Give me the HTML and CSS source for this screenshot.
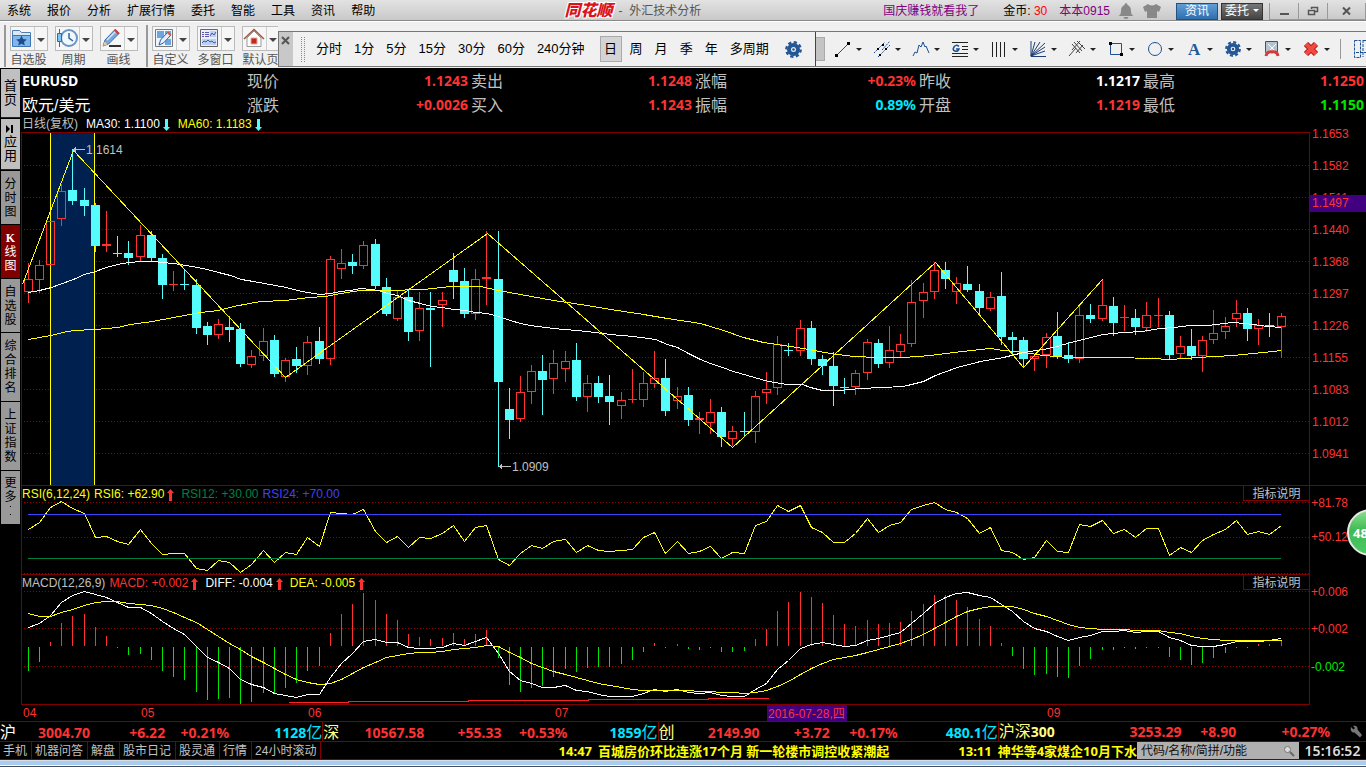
FILE: index.html
```html
<!DOCTYPE html>
<html lang="zh-CN">
<head>
    <meta charset="UTF-8">
    <title>同花顺 - 外汇技术分析</title>
    <link rel="stylesheet" href="styles.css">
</head>
<body>
<header class="titlebar">
    <nav class="menu">
        <button>系统</button><button>报价</button><button>分析</button><button>扩展行情</button><button>委托</button><button>智能</button><button>工具</button><button>资讯</button><button>帮助</button>
    </nav>
    <h1 class="title"><b class="logo">同花顺</b><span>- &nbsp;外汇技术分析</span></h1>
    <div class="user">
        <a class="promo" href="#">国庆赚钱就看我了</a>
        <span class="coin">金币: <em>30</em></span>
        <a href="#">本本0915</a>
        <svg width="16" height="18" viewBox="0 0 16 18"><path d="M8 1a2 2 0 0 1 1.500 2C12 4 13 6 13 9c0 3 1 4 2.500 5H.5C2 13 3 12 3 9c0-3 1-5 3.500-6A2 2 0 0 1 8 1zM5.500 15h5a2.500 2 0 0 1-5 0z" fill="#888"/></svg>
        <svg width="20" height="16" viewBox="0 0 20 16"><path d="M6 1q4 3 8 0l5 3-2 5-2-1v7H5V8L3 9 1 4z" fill="#888"/></svg>
    </div>
    <div class="title-btns">
        <button class="news">资讯</button>
        <button class="trade">委托<i class="caret"></i></button>
    </div>
    <div class="win-btns">
        <button aria-label="最小化"><svg width="10" height="10"><path d="M1 7h9v2H1z" fill="#555"/></svg></button>
        <button aria-label="还原"><svg width="12" height="10"><path d="M4.500 3V1.500h6v4H8M1.500 4.500h6v4h-6z" fill="none" stroke="#555" stroke-width="1.500"/></svg></button>
        <button aria-label="关闭" class="wide"><svg width="10" height="10"><path d="M1 1.500l7 7M8 1.500l-7 7" stroke="#555" stroke-width="2"/></svg></button>
    </div>
</header>

<div class="toolbar">
    <div class="tools">
        <div class="group">
            <button class="tool"><span class="box"><span class="pic">
                <svg width="22" height="20" viewBox="0 0 22 20"><path d="M1.500 17.500v-15h7l2 2h9v13z" fill="#dbe9f7" stroke="#4d7fb5"/><path d="M1.500 7.500h18v11h-18z" fill="#7fb6ec" stroke="#3c74b4"/><path d="M10.500 7.500l1.600 3.500 3.700.4-2.800 2.500.8 3.700-3.300-1.900-3.300 1.900.8-3.700-2.800-2.500 3.700-.4z" fill="#1d4e8f"/></svg>
            </span><span class="drop"><i class="caret"></i></span></span>自选股</button>
            <button class="tool"><span class="box"><span class="pic">
                <svg width="22" height="20" viewBox="0 0 22 20"><circle cx="13" cy="10" r="8" fill="#f2f7fc" stroke="#6a94c4" stroke-width="2"/><path d="M13 5v5l4 3" fill="none" stroke="#2f67a8" stroke-width="1.500"/><path d="M3.500 1v18" stroke="#2f67a8"/><path d="M1.500 5.500h4v8h-4z" fill="#7dc4f5" stroke="#2f67a8"/></svg>
            </span><span class="drop"><i class="caret"></i></span></span>周期</button>
            <button class="tool"><span class="box"><span class="pic">
                <svg width="22" height="20" viewBox="0 0 22 20"><path d="M8 18h12" stroke="#333" stroke-width="2"/><path d="M2 18l2-6L14 1.500l4 4L7.500 16z" fill="#79a9dc" stroke="#3b6aa0"/><path d="M6 12L15 3" stroke="#d7e9fb" stroke-width="1.500"/><path d="M13 2.500l1.500-1.500 4 4L17 6.500z" fill="#d23a2c"/><path d="M2 18l1.500-4.500 3 3z" fill="#e8c9a0"/></svg>
            </span><span class="drop"><i class="caret"></i></span></span>画线</button>
        </div>
        <div class="group">
            <button class="tool"><span class="box"><span class="pic">
                <svg width="20" height="20" viewBox="0 0 20 20"><path d="M1.500 1.500h17v17h-17z" fill="#eef4fb" stroke="#777"/><path d="M3 3h7v7H3zM11 11h6v6h-6zM11 3h6v5h-6z" fill="#6da5df"/><path d="M5 17l1.500-5 7-7.500 3 3-7 7.500z" fill="#e6eef8" stroke="#2c5f9e"/><path d="M13 5l1.500-1.500 3 3L16 8z" fill="#d45c46"/></svg>
            </span><span class="drop"><i class="caret"></i></span></span>自定义</button>
            <button class="tool"><span class="box"><span class="pic">
                <svg width="20" height="20" viewBox="0 0 20 20"><path d="M1.500 1.500h17v17h-17z" fill="#e8effa" stroke="#666"/><path d="M3 4.500h2M6 4.500h4M3 6.500h2M6 6.500h4M3 8.500h2M6 8.500h4" stroke="#5a57b0"/><path d="M11 3h6v6h-6zM3 11h14v6H3z" fill="#bfd0ef"/><path d="M11 8l2-3 2 2 2-3M3 15l2-2 2 1 2-2 2 2 2-1 2 2 2-1" fill="none" stroke="#4058a8"/></svg>
            </span><span class="drop"><i class="caret"></i></span></span>多窗口</button>
            <button class="tool"><span class="box"><span class="pic">
                <svg width="22" height="20" viewBox="0 0 22 20"><path d="M4 10v8.500h14V10l-7-7z" fill="#fff" stroke="#999"/><path d="M1 11L11 1.500 21 11" fill="none" stroke="#9a5a40" stroke-width="1.500"/><path d="M8 10h6v6H8z" fill="#c22a1c" stroke="#e4a79c"/></svg>
            </span><span class="drop"><i class="caret"></i></span></span>默认页</button>
        </div>
    </div>
    <div class="float-bar">
        <button class="close" aria-label="关闭工具条"><svg width="10" height="10"><path d="M1 1l7 7M8 1L1 8" stroke="#555" stroke-width="2"/></svg></button>
        <i class="grip"></i>
        <div class="periods">
            <button>分时</button><button>1分</button><button>5分</button><button>15分</button><button>30分</button><button>60分</button><button>240分钟</button><button class="day" aria-pressed="true">日</button><button>周</button><button>月</button><button>季</button><button>年</button><button class="multi">多周期</button>
            <button aria-label="周期设置"><svg class="gear" width="17" height="17" viewBox="0 0 17 17"><use href="#gear"/></svg></button>
        </div>
        <i class="hidden-btn"></i>
        <div class="draws" id="draws"></div>
        <i class="sep"></i>
        <button class="last" aria-label="区间"><svg width="14" height="20"><path d="M.5 1.500h6v17h-6zM9 1.500h5M9 1v17M2 13.500h12" fill="none" stroke="#1c4f93" stroke-dasharray="3 1"/></svg></button>
    </div>
</div>

<main class="main">
    <nav class="side">
        <button class="light">首页</button>
        <button class="light app"><svg width="9" height="8"><path d="M0 0l4 4-4 4zM5 0h2v8H5z" fill="#000"/></svg>应用</button>
        <button class="mid">分时图</button>
        <button class="mid on"><b>K</b>线图</button>
        <button class="mid">自选股</button>
        <button class="tall">综合排名</button>
        <button class="tall">上证指数</button>
        <button class="more">更多<i></i><i></i></button>
    </nav>
    <div class="content">
        <section class="quote">
            <strong>EURUSD</strong>
            <p>现价<b class="up">1.1243</b></p>
            <p>卖出<b class="up">1.1248</b></p>
            <p>涨幅<b class="up">+0.23%</b></p>
            <p>昨收<b class="flat">1.1217</b></p>
            <p>最高<b class="up">1.1250</b></p>
            <span class="cn">欧元/美元</span>
            <p>涨跌<b class="up">+0.0026</b></p>
            <p>买入<b class="up">1.1243</b></p>
            <p>振幅<b class="vol">0.89%</b></p>
            <p>开盘<b class="up">1.1219</b></p>
            <p>最低<b class="down">1.1150</b></p>
        </section>
        <div class="legend ma">
            <span class="gray">日线(复权)</span>
            <span class="white">MA30: 1.1100<svg class="arrow cyan"><use href="#down"/></svg></span>
            <span class="yellow">MA60: 1.1183<svg class="arrow cyan"><use href="#down"/></svg></span>
        </div>
        <div class="row">
            <div class="panel"><svg class="plot price" id="price"></svg></div>
            <svg class="scale price-scale" id="priceScale"></svg>
        </div>
        <div class="row line">
            <div class="panel">
                <div class="legend">
                    <span class="yellow">RSI(6,12,24)</span>
                    <span class="yellow">RSI6: +62.90<svg class="arrow red"><use href="#up"/></svg></span>
                    <span class="green">RSI12: +30.00</span>
                    <span class="blue">RSI24: +70.00</span>
                    <button class="explain">指标说明</button>
                </div>
                <svg class="plot rsi" id="rsi"></svg>
            </div>
            <svg class="scale rsi-scale" id="rsiScale"></svg>
        </div>
        <div class="row">
            <div class="panel last-panel">
                <div class="legend">
                    <span class="gray">MACD(12,26,9)</span>
                    <span class="red">MACD: +0.002<svg class="arrow red"><use href="#up"/></svg></span>
                    <span class="white">DIFF: -0.004<svg class="arrow red"><use href="#up"/></svg></span>
                    <span class="yellow">DEA: -0.005<svg class="arrow red"><use href="#up"/></svg></span>
                    <button class="explain">指标说明</button>
                </div>
                <svg class="plot macd" id="macd"></svg>
            </div>
            <svg class="scale macd-scale" id="macdScale"></svg>
        </div>
        <svg class="dates" id="dates"></svg>
    </div>
</main>

<footer>
    <div class="indexes">
        <div class="index sh"><p><span class="white">沪</span><b>3004.70</b></p><b>+6.22</b><b>+0.21%</b><b class="vol">1128<span>亿</span></b></div>
        <div class="index sz"><p><span>深</span><b>10567.58</b></p><b>+55.33</b><b>+0.53%</b><b class="vol">1859<span>亿</span></b></div>
        <div class="index cy"><p><span>创</span><b>2149.90</b></p><b>+3.72</b><b>+0.17%</b><b class="vol">480.1<span>亿</span></b></div>
        <div class="index hs"><p><span>沪深<strong>300</strong></span><b>3253.29</b></p><b>+8.90</b><b>+0.27%</b>
            <svg width="14" height="14" viewBox="0 0 14 14"><path d="M2 2l2.500 2.500L6 3 4 1c3-1 5 1 4.500 3.500L13 10l-2 2.500-5.500-5C3 8 1 5.500 2 2z" fill="#777"/></svg>
        </div>
    </div>
    <div class="status">
        <nav class="links">
            <button>手机</button><button>机器问答</button><button>解盘</button><button>股市日记</button><button>股灵通</button><button>行情</button><button>24小时滚动</button>
        </nav>
        <div class="news-roll">
            <a href="#"><time>14:47</time>百城房价环比连涨17个月 新一轮楼市调控收紧潮起</a>
            <a href="#"><time>13:11</time>神华等4家煤企10月下水</a>
        </div>
        <label class="search">
            <input type="text" placeholder="代码/名称/简拼/功能" aria-label="代码/名称/简拼/功能">
            <svg width="12" height="12"><path d="M7 7l4 4" stroke="#666" stroke-width="2"/><circle cx="4.500" cy="4.500" r="3" fill="#ddd" stroke="#777"/></svg>
        </label>
        <time class="clock">15:16:52</time>
    </div>
    <div class="desktop"></div>
</footer>
<button class="ball">48</button>

<svg class="defs">
    <symbol id="up" viewBox="0 0 7 12"><path d="M3.500 0L7 4H5v8H2V4H0z"/></symbol>
    <symbol id="down" viewBox="0 0 7 12"><path d="M3.500 12L0 8h2V0h3v8h2z"/></symbol>
    <symbol id="gear" viewBox="0 0 17 17"><circle cx="8.500" cy="8.500" r="4.500" fill="none" stroke="#235795" stroke-width="4"/><circle cx="8.500" cy="8.500" r="7.200" fill="none" stroke="#235795" stroke-width="2.400" stroke-dasharray="3.200 2.455"/><circle cx="8.500" cy="8.500" r="1.300" fill="#235795"/></symbol>
</svg>
<script src="chart.js"></script>
</body>
</html>
```

FILE: styles.css
```css
* {
    box-sizing: border-box;
    margin: 0;
    padding: 0;
}

body {
    background: #000;
    color: #c0c0c0;
    font: 12px/16px "Liberation Sans", "Noto Sans CJK SC", sans-serif;
    min-height: 100vh;
    display: flex;
    flex-direction: column;
    position: relative;
    overflow-x: hidden;
}

button {
    border: 0;
    background: none;
    color: inherit;
    font: inherit;
    cursor: pointer;
    white-space: nowrap;
}

a {
    color: #800080;
    text-decoration: none;
}

em, i {
    font-style: normal;
}

svg {
    display: block;
}

.defs {
    display: none;
}

.caret {
    display: inline-block;
    border: 4px solid transparent;
    border-top-color: #444;
    border-bottom: 0;
}

/* 标题栏 */
.titlebar {
    display: flex;
    align-items: center;
    height: 21px;
    padding: 2px 0 0 7px;
    color: #000;
    background: linear-gradient(#e2e2e2, #c9c9c9);
    border-bottom: 1px solid #888;
}

.menu {
    display: flex;
    gap: 16px;
    flex: 1;
}

.title {
    display: flex;
    align-items: center;
    gap: 6px;
    font-size: 12px;
    font-weight: normal;
    color: #555;
    margin-right: 182px;
}

.logo {
    width: 48px;
    font-size: 16px;
    line-height: 18px;
    font-style: italic;
    font-weight: 900;
    color: #d8141c;
    text-shadow: 1px 1px #fff, -1px -1px #fff, 1px -1px #fff, -1px 1px #fff;
}

.user {
    display: flex;
    align-items: center;
    gap: 8px;
    margin-right: 14px;
}

.promo {
    margin-right: 16px;
}

.coin {
    margin-right: 4px;
}

.coin em {
    color: #f00;
}

.title-btns {
    display: flex;
    gap: 3px;
    margin-right: 6px;
}

.title-btns button {
    width: 42px;
    height: 17px;
    line-height: 15px;
    color: #fff;
    border: 1px solid #24527f;
    background: linear-gradient(#5f9ed6, #2f6fae);
}

.title-btns .trade {
    border-color: #333;
    background: linear-gradient(#777, #444);
}

.trade .caret {
    border-top-color: #fff;
    border-width: 3px 3px 0;
    margin: 0 0 3px 4px;
}

.win-btns {
    display: flex;
    border: 1px solid #999;
    border-top: 0;
}

.win-btns button {
    display: flex;
    align-items: center;
    justify-content: center;
    width: 29px;
    height: 16px;
    border-right: 1px solid #999;
}

.win-btns .wide {
    width: 37px;
    border-right: 0;
}

/* 工具栏 */
.toolbar {
    display: flex;
    height: 47px;
    background: #f0f0f0;
    border-top: 1px solid #fff;
    color: #000;
}

.tools {
    display: flex;
    width: 278px;
    flex: none;
    overflow: hidden;
}

.group {
    display: flex;
    flex: none;
    margin: 3px 0 0 4px;
    padding: 0 1px 0 0;
    border-left: 2px solid #999;
    height: 42px;
}

.tool {
    width: 45px;
    height: 42px;
    color: #555;
    line-height: 14px;
}

.box {
    display: flex;
    width: 38px;
    height: 25px;
    margin: 0 auto 2px;
    border: 1px solid #bbb;
    background: #f6f6f6;
}

.pic {
    flex: 1;
    display: flex;
    align-items: center;
    justify-content: center;
    border-right: 1px solid #ccc;
}

.drop {
    width: 12px;
    padding-top: 4px;
}

.float-bar {
    flex: 1;
    min-width: 0;
    display: flex;
    align-items: center;
    height: 36px;
    margin-top: 9px;
    border: 1px solid #777;
    border-right: 0;
    overflow: hidden;
}

.float-bar > * {
    flex: none;
}

.close {
    width: 14px;
    height: 34px;
    padding: 4px 2px;
    background: #c8c8c8;
    display: flex;
}

.grip {
    width: 4px;
    height: 25px;
    margin: 0 11px 0 8px;
    border-left: 1px dotted #888;
    border-right: 1px dotted #888;
}

.periods {
    display: flex;
    align-items: center;
    gap: 12px;
    height: 34px;
    width: 500px;
    border-right: 1px solid #444;
    font-size: 13px;
}

.periods .day {
    width: 22px;
    height: 26px;
    margin: 0 -4px 0 3px;
    background: #d4d4d4;
    border: 1px solid #aaa;
}

.periods .multi {
    margin-right: 4px;
}

.hidden-btn {
    width: 9px;
    height: 24px;
    border: 1px solid #aaa;
    border-left: 0;
    background: #c4c4c4;
    margin-right: 10px;
}

.draws {
    display: flex;
}

.draws button {
    width: 39px;
    display: flex;
    align-items: center;
    gap: 5px;
}

.draws svg {
    overflow: visible;
}

.draws .caret {
    border-width: 3px 3px 0;
    border-top-color: #222;
}

.sep {
    height: 20px;
    border-left: 1px solid #999;
    margin: 0 13px 0 -2px;
}

/* 左侧导航 */
.main {
    display: flex;
    flex: none;
}

.side {
    width: 21px;
    flex: none;
    padding: 1px 1px 0 1px;
}

.side button {
    display: flex;
    flex-direction: column;
    align-items: center;
    justify-content: center;
    width: 19px;
    margin-bottom: 1px;
    padding: 0 3px;
    white-space: normal;
    line-height: 14px;
    background: #999;
    color: #000;
}

.side .light {
    height: 49px;
    background: #c0c0c0;
    border-bottom: 1px solid #800000;
    font-size: 13px;
}

.side .app {
    height: 51px;
}

.side .app svg {
    margin-bottom: 2px;
}

.side .mid {
    height: 53px;
}

.side .tall {
    height: 68px;
}

.side .more {
    height: 53px;
}

.side .more i {
    width: 1px;
    height: 1px;
    margin: 2px 0 5px;
    background: #000;
}

.side .on {
    background: #800000;
    color: #fff;
}

.side .on b {
    font-family: "Liberation Serif", serif;
}

/* 报价 */
.content {
    flex: 1;
    min-width: 0;
}

.quote {
    display: grid;
    grid-template-columns: repeat(6, 1fr);
    grid-auto-rows: 24px;
    padding: 1px 0 0 1px;
    font-size: 16px;
    line-height: 26px;
}

.quote p {
    display: flex;
    justify-content: space-between;
    padding: 0 2px 0 1px;
}

.quote b,
.quote strong {
    font: bold 14px/24px "Noto Sans", sans-serif;
}

.quote strong,
.quote .cn {
    color: #fff;
}

.up { color: #ff3232; }
.down { color: #00e600; }
.flat { color: #fff; }
.vol { color: #00e6ff; }

/* 图表 */
.legend {
    display: flex;
    align-items: center;
    gap: 4px;
    height: 15px;
    line-height: 15px;
    white-space: nowrap;
}

.ma {
    padding-left: 1px;
    gap: 8px;
}

.legend span {
    display: flex;
    align-items: center;
}

.panel .legend {
    padding-top: 2px;
}

.arrow {
    width: 7px;
    height: 12px;
    margin: 0 3px;
}

.ma .arrow {
    margin-right: 0;
}

.cyan { fill: #54fcfc; }
.gray { color: #c0c0c0; }
.white { color: #fff; }
.yellow { color: #ff0; }
.green { color: #008040; }
.blue { color: #4040ff; }
.red { color: #ff3232; fill: #ff3232; }

.explain {
    width: 66px;
    height: 15px;
    margin: -2px 0 0 auto;
    line-height: 17px;
    border-left: 1px solid #800000;
    border-bottom: 1px solid #800000;
}

.row {
    display: flex;
}

.panel {
    flex: 1;
    min-width: 0;
    border: 1px solid #800000;
    border-bottom: 0;
}

.last-panel {
    border-bottom: 1px solid #800000;
}

.plot {
    width: 100%;
    shape-rendering: crispEdges;
}

.price { height: 352px; }
.rsi { height: 73px; }
.macd { height: 114px; }

.scale {
    width: 56px;
    flex: none;
    overflow: visible;
}

.price-scale { height: 353px; }
.rsi-scale { height: 89px; }
.macd-scale { height: 131px; }

.line .scale {
    border-top: 1px solid #800000;
}

.dates {
    width: 100%;
    height: 16px;
}

.plot polyline,
.plot path {
    fill: none;
}

/* 底部 */
.indexes {
    display: flex;
    height: 20px;
    border-top: 1px solid #800000;
    line-height: 20px;
}

.index {
    display: grid;
    align-items: center;
    color: #ffff80;
    font-size: 16px;
    border-right: 1px solid #800000;
}

.index p {
    display: flex;
    justify-content: space-between;
}

.index b {
    color: #ff3232;
    font: bold 14px/20px "Noto Sans", "Noto Sans CJK SC", sans-serif;
    text-align: right;
}

.index strong {
    font: bold 14px/20px "Noto Sans", sans-serif;
}

.index .vol {
    color: #00e6ff;
}

.index .vol span {
    font-weight: normal;
    font-size: 16px;
}

.sh { flex: 323; grid-template-columns: 90fr 75fr 64fr 93fr; }
.sz { flex: 335; grid-template-columns: 101fr 77fr 66fr 90fr; }
.cy { flex: 340; grid-template-columns: 101fr 70fr 68fr 100fr; }
.hs { flex: 368; grid-template-columns: 183fr 55fr 94fr 36fr; border-right: 0; }

.hs svg {
    margin-left: 19px;
}

.status {
    display: flex;
    height: 19px;
    line-height: 19px;
    border-top: 1px solid #800000;
    border-bottom: 1px solid #800000;
}

.links {
    display: flex;
}

.links button {
    padding: 0 4px 0 3px;
    border-right: 1px solid #800000;
}

.news-roll {
    flex: 1;
    min-width: 0;
    display: flex;
    justify-content: flex-end;
    gap: 69px;
    overflow: hidden;
    font: bold 13px/19px "Noto Sans", "Noto Sans CJK SC", sans-serif;
    white-space: nowrap;
}

.news-roll a {
    color: #ff0;
}

.news-roll time {
    margin-right: 6px;
}

.search {
    display: flex;
    align-items: center;
    width: 162px;
    padding: 1px 4px 0;
    background: #b0b0b0;
}

.search input {
    flex: 1;
    min-width: 0;
    height: 16px;
    border: 0;
    outline: 0;
    background: none;
    font: inherit;
}

.search input::placeholder {
    color: #111;
    opacity: 1;
}

.clock {
    width: 67px;
    text-align: center;
    font: 600 14px/18px "Noto Sans", sans-serif;
    color: #ddd;
}

.desktop {
    height: 7px;
    background: linear-gradient(#d8dde4 0 1px, #a8ccf2 1px 5px, #fff 5px 6px, #405060 6px);
}

/* 悬浮球 */
.ball {
    position: absolute;
    right: -28px;
    top: 509px;
    width: 47px;
    height: 47px;
    padding-left: 4px;
    border: 2px solid #e8e8e8;
    border-radius: 50%;
    background: linear-gradient(#8be08b, #3fb955 45%, #4ccb62);
    color: #fff;
    font: bold 13px/40px "Noto Sans", sans-serif;
    text-align: left;
}
```

FILE: chart.js
```js
function my$(id) {
    return document.getElementById(id);
}

//K线: 颜色, 最高, 实体上, 实体下, 最低
var candles = [
    "r 263 279 292 303", "r 260 265 280 293", "r 221 221 265 265", "r 184 191 219 226", "c 149 190 201 205",
    "c 188 200 206 216", "c 203 205 246 252", "r 211 244 246 252", "c 236 253 254 257", "c 241 253 258 265",
    "r 225 235 257 261", "c 231 235 258 261", "c 254 258 285 299", "r 271 284 285 291", "c 269 284 285 290",
    "c 279 285 328 334", "c 322 326 335 345", "r 319 324 335 339", "c 316 327 330 342", "c 323 329 364 367",
    "r 350 356 365 368", "r 328 341 356 361", "c 335 340 374 377", "r 358 360 377 382", "c 347 359 366 373",
    "r 336 342 366 375", "c 327 341 359 364", "r 256 259 359 365", "r 249 263 269 279", "c 254 262 266 274",
    "r 241 245 266 269", "c 239 244 286 289", "c 278 287 314 316", "r 290 297 319 321", "c 290 297 332 341",
    "r 292 308 331 341", "c 292 308 310 367", "r 292 300 305 327", "c 253 270 282 299", "c 268 281 314 318",
    "r 269 279 314 320", "r 231 277 279 305", "c 231 279 382 467", "c 388 409 420 439", "r 376 392 419 422",
    "r 365 371 392 404", "c 355 371 380 415", "r 350 363 379 394", "r 351 361 369 382", "c 343 360 397 401",
    "r 375 383 397 412", "c 376 383 397 403", "c 375 396 402 425", "r 392 400 406 419", "r 369 399 400 403",
    "r 372 383 400 407", "r 351 378 384 388", "c 359 378 411 416", "r 387 396 401 409", "c 387 395 420 426",
    "r 412 418 420 434", "r 399 412 423 434", "c 407 412 437 447", "r 426 431 439 446", "c 412 431 432 437",
    "r 391 396 432 443", "r 372 389 393 404", "r 336 344 388 395", "c 343 350 351 356", "r 320 328 351 356",
    "c 321 328 359 365", "c 355 359 366 375", "c 352 366 386 406", "c 378 387 388 394", "r 370 373 387 395",
    "r 339 342 373 380", "c 339 343 364 368", "r 326 350 363 368", "r 334 344 352 357", "r 280 302 344 347",
    "r 283 292 301 318", "r 262 270 292 299", "c 262 270 279 289", "r 277 283 292 304", "c 266 284 290 292",
    "c 284 291 308 316", "r 292 297 309 311", "c 272 296 337 345", "c 332 337 340 355", "c 337 340 359 367",
    "r 354 356 359 371", "r 333 337 355 368", "c 312 336 356 359", "c 342 355 359 363", "r 306 315 359 363",
    "c 304 315 319 323", "r 279 305 319 321", "c 297 306 323 336", "r 305 317 318 331", "c 309 318 327 335",
    "r 302 315 328 332", "r 298 315 316 327", "c 311 315 355 359", "r 336 346 354 359", "c 329 346 356 360",
    "r 336 340 356 372", "r 310 333 340 344", "r 317 326 332 339", "r 300 313 319 327", "c 308 313 329 341",
    "r 319 325 329 345", "c 313 325 327 337", "r 313 316 327 358"
];
//均线
var ma30 = "28,292 39,290 51,287 62,283 73,279 84,274 95,271 106,267 117,264 129,262 140,261 152,261 162,262 173,263 185,265 197,267 207,269 218,272 230,275 241,279 253,281 264,283 275,285 286,287 297,290 307,292 320,294 330,293 340,291 350,290 360,288 370,289 378,290 387,293 397,295 408,300 420,303 431,306 442,307 453,309 465,310 475,312 487,313 498,316 510,320 520,323 530,325 553,328 587,331 610,334 633,336 655,339 667,344 677,347 688,353 700,359 710,363 722,367 733,371 747,375 768,381 787,384 802,384 810,387 822,390 838,390 860,388 903,386 923,381 935,375 957,367 980,361 1003,357 1023,352 1043,349 1057,346 1070,342 1087,338 1102,334 1113,333 1123,332 1142,331 1160,328 1173,327 1190,325 1208,325 1223,323 1233,322 1253,324 1267,326 1281,327";
var ma60 = "28,339 39,337 51,335 62,332 73,330 95,329 117,327 130,324 152,321 173,317 200,312 218,310 233,306 260,301 285,300 308,297 325,296 340,293 360,290 387,290 423,289 450,286 480,286 498,290 520,294 553,300 587,305 610,309 637,313 667,318 700,323 723,330 743,337 763,342 783,345 803,348 830,353 853,356 877,357 903,357 930,355 953,352 980,349 990,348 1003,350 1023,352 1043,355 1067,357 1117,357 1150,358 1170,359 1197,357 1233,355 1263,352 1281,350";
var zigzag = "22,284 73,150 285,377 487,233 732,447 935,262 1023,367 1102,279";
var rsi6 = [529,522,507,501,508,513,537,536,541,544,529,543,554,553,553,568,570,560,562,572,564,550,562,552,554,537,546,512,513,514,509,531,542,536,547,537,538,533,525,541,527,525,559,565,553,545,548,541,539,552,545,550,551,550,549,537,532,553,541,553,551,546,558,552,553,525,521,505,511,505,527,532,542,542,533,518,532,525,522,509,505,502,509,512,518,533,527,550,552,559,557,540,551,552,524,526,520,533,529,537,528,528,555,547,552,540,534,529,520,534,531,534,525];
var macd = [671,662,642,623,616,614,627,636,648,655,654,660,671,677,680,692,700,699,698,704,702,693,693,688,683,671,666,633,614,604,593,600,614,620,634,637,639,638,633,639,634,630,658,685,692,688,686,677,669,672,668,667,667,664,660,652,643,648,644,649,650,648,652,652,651,639,629,611,602,592,597,603,615,624,626,620,624,623,622,611,604,595,595,600,607,619,626,643,656,669,675,674,677,678,666,659,650,650,648,649,648,648,657,660,665,663,658,653,648,648,644,644,641];
var diff = [627,623,615,602,595,591,594,597,602,607,607,613,621,628,634,646,657,662,668,679,684,687,693,695,697,694,694,677,663,653,641,639,642,642,647,648,648,647,643,645,641,637,653,671,680,683,687,687,685,690,691,694,696,696,696,693,689,691,689,692,693,692,695,696,696,689,683,669,660,648,644,642,644,646,645,640,638,635,632,623,613,603,597,593,592,595,597,604,611,621,628,631,636,640,637,635,631,631,630,632,631,631,637,640,645,646,646,644,641,641,641,640,638];
var dea = [613,616,616,612,609,605,602,601,601,603,604,605,608,612,617,622,629,636,643,649,656,662,668,674,679,682,684,683,679,673,667,662,657,655,653,652,652,651,649,648,647,645,646,652,657,663,667,671,674,677,680,683,685,687,689,690,690,690,690,690,691,691,692,692,693,692,690,686,681,674,668,663,659,657,655,652,649,646,643,639,634,628,622,616,611,608,606,606,606,609,613,616,620,624,627,628,629,629,629,630,630,630,632,633,636,638,639,640,640,640,640,640,640];

var ratio = 1;
//横坐标随窗口宽度变化
function px(x) {
    return Math.floor((x - 22) * ratio);
}
function barX(i) {
    return px(28.25 + i * 11.1857);
}
function rect(x, y, w, h, color) {
    return '<rect x="' + x + '" y="' + y + '" width="' + w + '" height="' + h + '" fill="' + color + '"/>';
}
function curve(points, color) {
    return '<polyline points="' + points + '" stroke="' + color + '"/>';
}
function fromText(text) {
    return text.split(" ").map(function (p) {
        p = p.split(",");
        return (px(+p[0]) + 0.5) + "," + (+p[1] + 0.5);
    }).join(" ");
}
function fromList(list) {
    return list.map(function (y, i) {
        return (barX(i) + 0.5) + "," + (y + 0.5);
    }).join(" ");
}
function grid(list, width) {
    return list.map(function (y) {
        return '<path d="M2 ' + (y + 0.5) + 'H' + width + '" stroke="#900000" stroke-dasharray="1 2"/>';
    }).join("");
}
function text(x, y, str, color) {
    return '<text x="' + x + '" y="' + y + '" fill="' + color + '">' + str + '</text>';
}
function put(id, top, html) {
    var el = my$(id);
    var box = el.getBoundingClientRect();
    el.setAttribute("viewBox", "0 " + top + " " + box.width + " " + Math.round(box.height));
    el.innerHTML = html;
}
//最高最低价箭头
function mark(x, y, str) {
    return rect(x + 1, y, 12, 1, "#c0c0c0") + rect(x + 2, y - 1, 2, 3, "#c0c0c0") + rect(x + 3, y - 2, 1, 5, "#c0c0c0") + text(x + 14, y + 5, str, "#c0c0c0");
}

function drawPrice(width) {
    var html = grid([165, 197, 229, 261, 293, 325, 357, 389, 421, 453], width);
    html += rect(px(51), 133, px(94) - px(51), 352, "#002050");
    html += rect(px(50), 133, 1, 352, "#ff0") + rect(px(94), 133, 1, 352, "#ff0");
    candles.forEach(function (item, i) {
        var c = item.split(" ");
        var hi = +c[1], top = +c[2], bottom = +c[3], lo = +c[4];
        var x = barX(i);
        var color = c[0] == "r" ? "#ff3232" : "#54fcfc";
        html += rect(x, hi, 1, top - hi, color) + rect(x, bottom, 1, lo - bottom, color);
        if (c[0] == "r" && bottom - top > 2) {
            html += '<path d="M' + (x - 3.5) + ' ' + (top + 0.5) + 'h8v' + (bottom - top - 1) + 'h-8z" stroke="' + color + '"/>';
        } else {
            html += rect(x - 4, top, 9, bottom - top, color);
        }
    });
    html += curve(fromText(ma60), "#ff0") + curve(fromText(ma30), "#fff") + curve(fromText(zigzag), "#ff0");
    html += mark(px(72), 149, "1.1614") + mark(px(498), 466, "1.0909");
    put("price", 133, html);
}

function drawRsi(width) {
    var html = grid([502, 537, 573], width);
    html += curve(fromList(rsi6), "#ff0");
    html += rect(px(28), 514, px(1281) - px(28), 1, "#4040ff");
    html += rect(px(28), 558, px(1281) - px(28), 1, "#008040");
    put("rsi", 501, html);
}

function drawMacd(width) {
    var html = grid([591, 628, 666], width);
    macd.forEach(function (y, i) {
        html += y < 647 ? rect(barX(i), y, 1, 646 - y, "#ff3232") : rect(barX(i), 647, 1, y - 647, "#00e600");
    });
    html += curve(fromList(diff), "#fff") + curve(fromList(dea), "#ff0");
    html += curve(fromText("288,702 348,702 348,701 468,701 468,700 588,700 588,699 708,699 708,698 768,698"), "#ff2020");
    put("macd", 590, html);
}

function drawScales() {
    var red = "#ff3232";
    var html = "";
    ["1.1653", "1.1582", "1.1511", "1.1440", "1.1368", "1.1297", "1.1226", "1.1155", "1.1083", "1.1012", "1.0941"].forEach(function (s, i) {
        html += text(2, 138 + i * 32, s, red);
    });
    html += rect(0, 195, 56, 17, "#400080") + text(2, 207, "1.1497", red);
    put("priceScale", 132, html);
    put("rsiScale", 485, text(1, 506, "+81.78", red) + text(1, 541, "+50.12", red));
    put("macdScale", 574, text(1, 596, "+0.006", red) + text(1, 633, "+0.002", red) + text(1, 671, "-0.002", "#00e600"));
    html = "";
    [[23, "04"], [141, "05"], [308, "06"], [555, "07"], [1047, "09"]].forEach(function (d) {
        html += text(px(d[0]) + 1, 717, d[1], red);
    });
    html += rect(px(767) + 1, 705, 80, 16, "#400080") + text(px(768) + 1, 718, "2016-07-28,四", red);
    put("dates", 705, html);
}

function draw() {
    var width = my$("price").getBoundingClientRect().width;
    ratio = width / 1287;
    drawPrice(width);
    drawRsi(width);
    drawMacd(width);
    drawScales();
}

//画线工具
var tools = [
    ["线段", '<path d="M2 14L13 3" stroke="#1c4f93"/><path d="M0 13h3v3H0zM12 1h3v3h-3z"/>'],
    ["平行线", '<path d="M0 12L11 1M4 16L16 4M8 9l8-9" stroke="#1c4f93" stroke-dasharray="2 1"/><path d="M3 7h2v2H3zM8 3h2v2H8zM5 13h2v2H5zM11 7h2v2h-2z"/>'],
    ["波浪线", '<path d="M0 15l2-4 2 1 2-8 2 2 2-5 2 5 1-1 3 7" fill="none" stroke="#1c4f93"/>'],
    ["黄金分割", '<path d="M0 1.500h16M10 5.500h6M10 8.500h6M0 12.500h16M0 15.500h16" stroke="#222"/><path d="M7 5.500Q4 3 2 6t1 4q3 1 4-2H4" fill="none" stroke="#1c4f93" stroke-width="1.500"/>'],
    ["周期线", '<path d="M1.500 1v15M5.500 1v15M9.500 1v15M13.500 1v15" stroke="#222"/>'],
    ["速阻线", '<path d="M1 0v15.500h15M1 15L5 1M1 15L10 1M1 15L15 2M1 15l14-9M1 15l14-5" fill="none" stroke="#1c3f73"/>'],
    ["安德鲁线", '<path d="M0 15L7 7M3 3l8 9M5 1l8 9M8 0l8 8M3 9l8-9M7 12l7-8" stroke="#444"/>'],
    ["矩形", '<path d="M2.500 2.500h11v11h-11z" fill="none" stroke="#1c4f93"/><path d="M1 1h3v3H1zM12 12h3v3h-3z"/>'],
    ["椭圆", '<circle cx="8" cy="8" r="6.500" fill="none" stroke="#1c4f93"/>'],
    ["文字", '<text x="2" y="14" fill="#235795" font-family="Liberation Serif, serif" font-size="17" font-weight="bold">A</text>'],
    ["设置", '<use href="#gear" width="16" height="16"/>'],
    ["隐藏画线", '<path d="M1.500.5h12v11h-12z" fill="#b4c3d2" stroke="#456"/><path d="M4 3l8 8M12 3l-8 8" stroke="#fff"/><path d="M2 15q1-5 6-4 5-1 6 4" fill="none" stroke="#d23c3c" stroke-width="3"/>'],
    ["删除", '<path d="M3 3l10 10M13 3L3 13" stroke="#a81010" stroke-width="6"/><path d="M3 3l10 10M13 3L3 13" stroke="#f04a42" stroke-width="4"/>']
];
my$("draws").innerHTML = tools.map(function (t) {
    return '<button aria-label="' + t[0] + '"><svg width="16" height="16" viewBox="0 0 16 16">' + t[1] + '</svg><i class="caret"></i></button>';
}).join("");

draw();
window.onresize = draw;
```
